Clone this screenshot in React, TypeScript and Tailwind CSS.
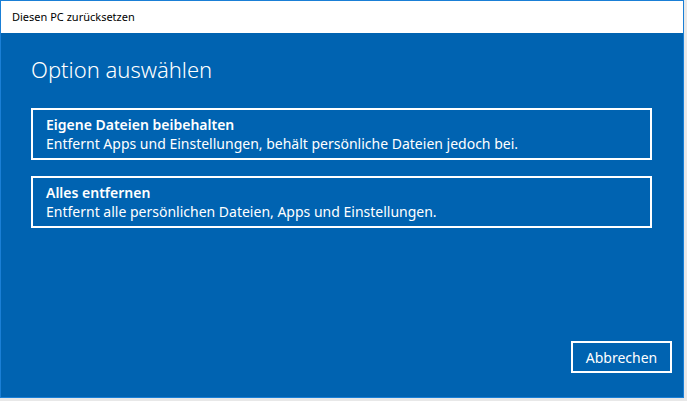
import * as React from "react";

const options = [
  {
    id: "keep",
    title: "Eigene Dateien beibehalten",
    text: "Entfernt Apps und Einstellungen, behält persönliche Dateien jedoch bei.",
  },
  {
    id: "remove",
    title: "Alles entfernen",
    text: "Entfernt alle persönlichen Dateien, Apps und Einstellungen.",
  },
];

export default function App() {
  return (
    <div
      className="w-[687px] h-[401px] bg-[#e8e8e8] overflow-hidden"
      style={{ fontFamily: '"Noto Sans", "Open Sans", sans-serif' }}
    >
      <div className="w-[684px] h-[398px] border border-[#1a7fd6] flex flex-col">
        {/* Title bar */}
        <div className="h-[32px] bg-white flex items-center pl-[11px] text-[11px] text-black">
          Diesen PC zurücksetzen
        </div>

        {/* Content */}
        <div className="flex-1 bg-[#0063b1] flex flex-col pl-[30px] pr-[11px] text-white">
          <h1 className="mt-[22px] text-[22px] leading-[28px] font-light">Option auswählen</h1>

          <div className="mt-[25px] flex flex-col gap-[16px] pr-[20px]">
            {options.map((o) => (
              <button
                key={o.id}
                className="h-[52px] border-2 border-white text-left pl-[13px] flex flex-col justify-center"
              >
                <span className="text-[14px] leading-[19px] font-semibold">{o.title}</span>
                <span className="text-[14px] leading-[20px]">{o.text}</span>
              </button>
            ))}
          </div>

          <div className="mt-auto mb-[24px] flex justify-end">
            <button className="w-[101px] h-[32px] border-2 border-white text-[14px]">
              Abbrechen
            </button>
          </div>
        </div>
      </div>
    </div>
  );
}
